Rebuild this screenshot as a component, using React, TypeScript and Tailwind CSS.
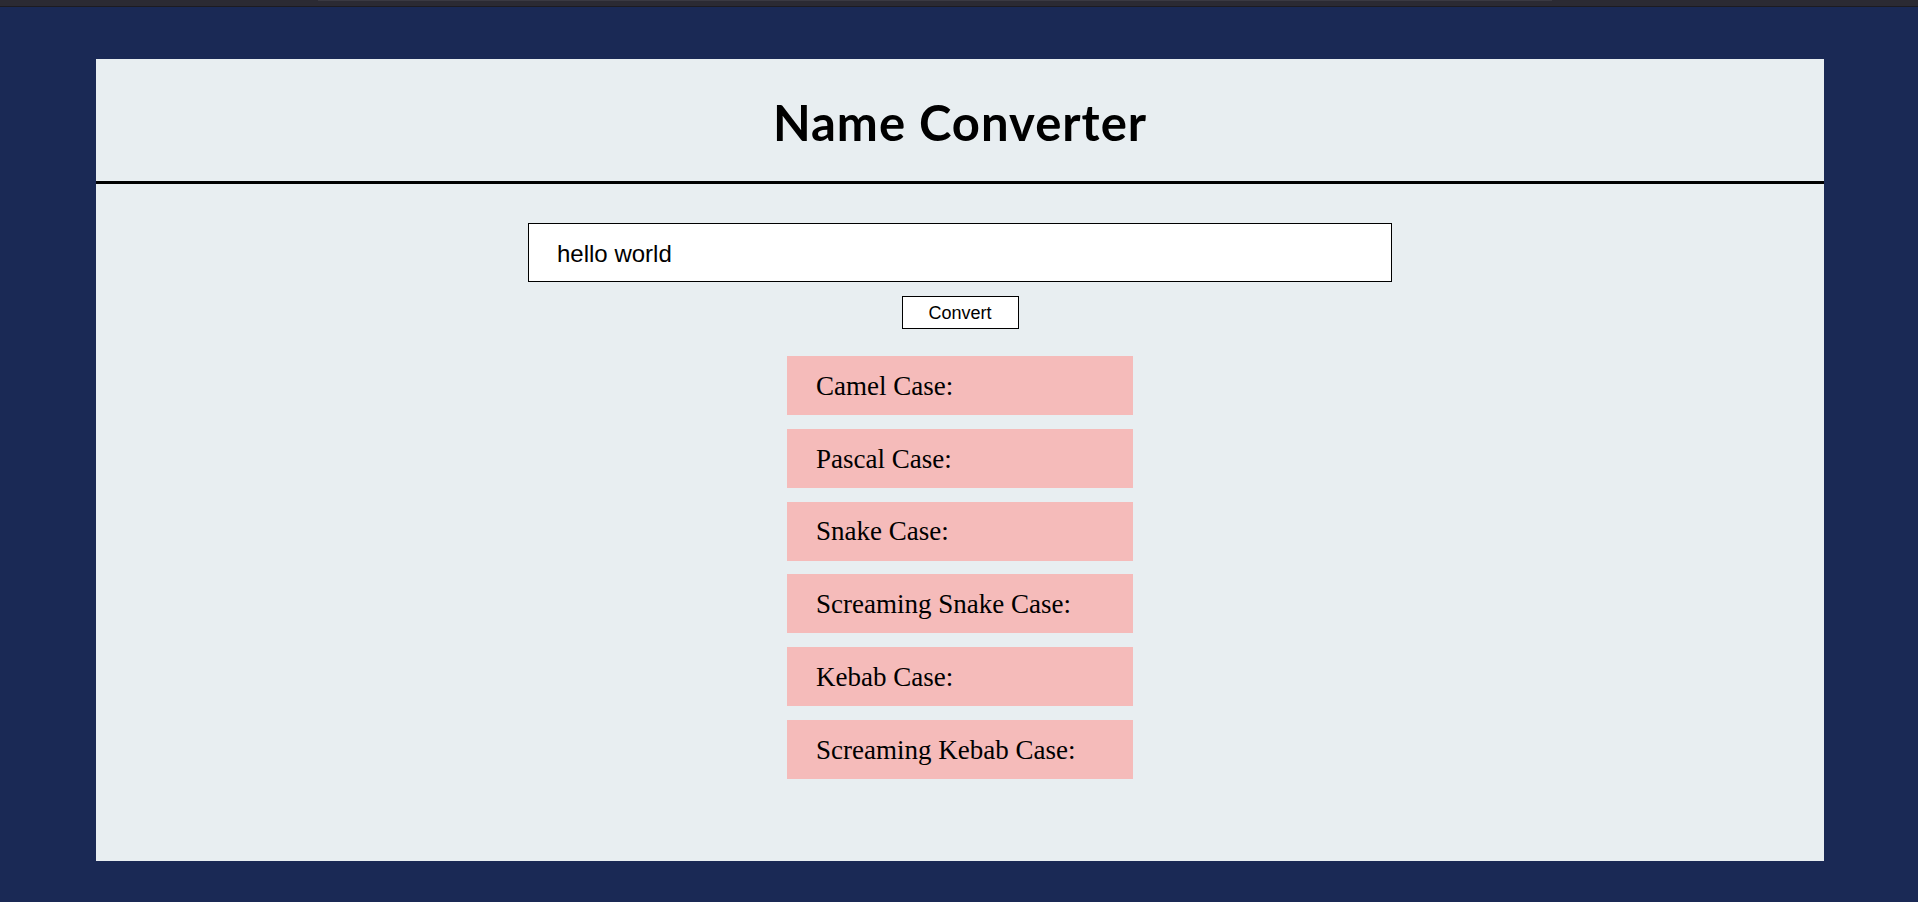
const CASES = [
  'Camel Case:',
  'Pascal Case:',
  'Snake Case:',
  'Screaming Snake Case:',
  'Kebab Case:',
  'Screaming Kebab Case:',
];

export default function App() {
  return (
    <div className="min-h-screen bg-[#1a2955]">
      {/* browser strip */}
      <div className="h-[7px] bg-[#2b2a33] border-b border-[#1c1b22]">
        <div className="ml-[318px] w-[1234px] h-px bg-[#3a3942]" />
      </div>

      <div className="pt-[52px] pb-[42px]">
        <div className="ml-[96px] w-[1728px] bg-[#e8eef1] flex flex-col items-center pb-[82px]">
          {/* Header */}
          <header className="w-full h-[125px] flex items-center justify-center border-b-[3px] border-black">
            <h1 className="text-[49px] font-bold text-black font-['Comic_Sans_MS','Lato',sans-serif] tracking-[1px] leading-none pt-[4px]">
              Name Converter
            </h1>
          </header>

          <input
            type="text"
            defaultValue="hello world"
            className="mt-[39px] w-[864px] h-[59px] bg-white border border-black pl-[28px] pt-[3px] text-[24px] text-black font-['Tahoma','Liberation_Sans',sans-serif] outline-none"
          />

          <button
            type="button"
            className="mt-[14px] w-[117px] h-[33px] bg-white border border-black text-[18px] text-black font-['Tahoma','Liberation_Sans',sans-serif] leading-none"
          >
            Convert
          </button>

          <div className="mt-[27px] flex flex-col gap-[13.8px]">
            {CASES.map((label) => (
              <div
                key={label}
                className="w-[346px] h-[59px] bg-[#f5bbba] flex items-center pl-[29px] pt-[1px] text-[27px] text-black font-['Times_New_Roman','Liberation_Serif',serif]"
              >
                {label}
              </div>
            ))}
          </div>
        </div>
      </div>
    </div>
  );
}
